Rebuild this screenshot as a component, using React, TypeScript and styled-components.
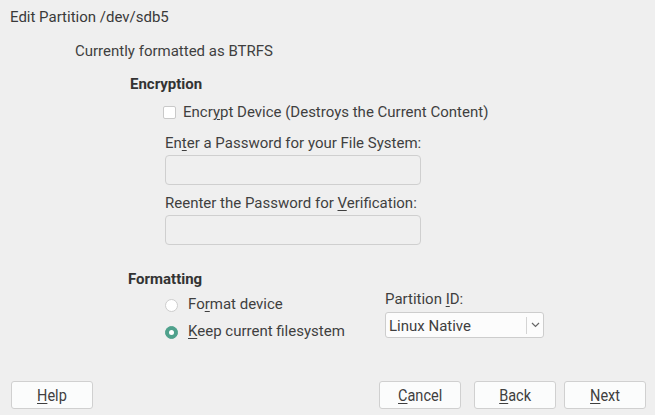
import React from 'react'
import styled, { createGlobalStyle } from 'styled-components'

const GlobalStyle = createGlobalStyle`
  html, body {
    margin: 0;
    padding: 0;
    background: #efefef;
  }
  body {
    font-family: Roboto, 'Liberation Sans', sans-serif;
    font-size: 15px;
    color: #3f3f3f;
  }
`

const Page = styled.div`
  box-sizing: border-box;
  width: 655px;
  height: 415px;
  display: flex;
  flex-direction: column;
  background: #efefef;
  line-height: 20px;
`

const Title = styled.div`
  margin: 7px 0 0 10px;
  color: #3a3a3a;
`

const Current = styled.div`
  margin: 14px 0 0 75px;
`

const Section = styled.div<{ indent: number; top: number }>`
  margin: ${({ top }) => top}px 0 0 ${({ indent }) => indent}px;
  display: flex;
  flex-direction: column;
`

const Heading = styled.div`
  font-weight: 700;
  color: #333;
`

const CheckRow = styled.label`
  display: flex;
  align-items: center;
  gap: 7px;
  margin: 8px 0 0 33px;
`

const CheckBox = styled.span`
  box-sizing: border-box;
  width: 13px;
  height: 13px;
  margin-top: 1px;
  background: #fff;
  border: 1px solid #c9c9c9;
  border-radius: 2px;
`

const Fields = styled.div`
  margin-left: 35px;
  display: flex;
  flex-direction: column;
`

const FieldLabel = styled.div<{ top: number }>`
  margin-top: ${({ top }) => top}px;
`

const TextBox = styled.div`
  box-sizing: border-box;
  margin-top: 2px;
  width: 256px;
  height: 30px;
  background: #efefef;
  border: 1px solid #cfcfcf;
  border-radius: 4px;
`

const FormatBody = styled.div`
  display: grid;
  grid-template-columns: 220px 159px;
  margin-left: 37px;
`

const Radios = styled.div`
  display: flex;
  flex-direction: column;
  gap: 7px;
  margin-top: 5px;
`

const RadioRow = styled.label`
  display: flex;
  align-items: center;
  gap: 10px;
`

const Radio = styled.span<{ checked?: boolean }>`
  box-sizing: border-box;
  position: relative;
  width: 13px;
  height: 13px;
  margin-top: 3px;
  border-radius: 50%;
  background: ${({ checked }) => (checked ? '#4fa18c' : '#fff')};
  border: 1px solid ${({ checked }) => (checked ? '#4fa18c' : '#cdcdcd')};

  &::after {
    content: '';
    display: ${({ checked }) => (checked ? 'block' : 'none')};
    position: absolute;
    left: 3px;
    top: 3px;
    width: 5px;
    height: 5px;
    border-radius: 50%;
    background: #fff;
  }
`

const PartitionCol = styled.div`
  display: flex;
  flex-direction: column;
`

const Select = styled.div`
  box-sizing: border-box;
  margin-top: 3px;
  height: 26px;
  display: flex;
  align-items: center;
  background: #fcfcfc;
  border: 1px solid #cdcdcd;
  border-radius: 3px;
  padding-left: 3px;
`

const SelectValue = styled.span`
  flex: 1;
  margin-top: 1px;
`

const SelectArrow = styled.span`
  display: flex;
  align-items: center;
  justify-content: center;
  height: 17px;
  width: 16px;
  border-left: 1px solid #d4d4d4;
  color: #666;
`

const Footer = styled.div`
  margin-top: auto;
  display: flex;
  padding: 0 8px 6px 11px;
`

const Button = styled.button<{ gapLeft?: number }>`
  box-sizing: border-box;
  width: 82px;
  height: 28px;
  margin-left: ${({ gapLeft }) => gapLeft ?? 0}px;
  background: #fbfcfc;
  border: 1px solid #d0d0d0;
  border-radius: 3px;
  font-family: Roboto, 'Liberation Sans', sans-serif;
  font-size: 16.5px;
  color: #3f3f3f;
  padding: 0;
  display: flex;
  align-items: center;
  justify-content: center;
`

const ButtonText = styled.span`
  display: inline-block;
  transform: scaleX(0.88);
`

const Key = styled.u`
  text-decoration-thickness: 1px;
  text-underline-offset: 2px;
`

function Chevron() {
  return (
    <svg width="9" height="6" viewBox="0 0 9 6">
      <path d="M1 1l3.5 3.5L8 1" fill="none" stroke="#666" strokeWidth="1.2" />
    </svg>
  )
}

export default function App() {
  return (
    <>
      <GlobalStyle />
      <Page>
        <Title>Edit Partition /dev/sdb5</Title>
        <Current>Currently formatted as BTRFS</Current>

        <Section indent={130} top={13}>
          <Heading>Encryption</Heading>
          <CheckRow>
            <CheckBox />
            <span>
              Encr<Key>y</Key>pt Device (Destroys the Current Content)
            </span>
          </CheckRow>
          <Fields>
            <FieldLabel top={11}>
              En<Key>t</Key>er a Password for your File System:
            </FieldLabel>
            <TextBox />
            <FieldLabel top={8}>
              Reenter the Password for <Key>V</Key>erification:
            </FieldLabel>
            <TextBox />
          </Fields>
        </Section>

        <Section indent={128} top={24}>
          <Heading>Formatting</Heading>
          <FormatBody>
            <Radios>
              <RadioRow>
                <Radio />
                <span>
                  Fo<Key>r</Key>mat device
                </span>
              </RadioRow>
              <RadioRow>
                <Radio checked />
                <span>
                  <Key>K</Key>eep current filesystem
                </span>
              </RadioRow>
            </Radios>
            <PartitionCol>
              <span>
                Partition <Key>I</Key>D:
              </span>
              <Select>
                <SelectValue>Linux Native</SelectValue>
                <SelectArrow>
                  <Chevron />
                </SelectArrow>
              </Select>
            </PartitionCol>
          </FormatBody>
        </Section>

        <Footer>
          <Button>
            <ButtonText>
              <Key>H</Key>elp
            </ButtonText>
          </Button>
          <Button gapLeft={286}>
            <ButtonText>
              <Key>C</Key>ancel
            </ButtonText>
          </Button>
          <Button gapLeft={13}>
            <ButtonText>
              <Key>B</Key>ack
            </ButtonText>
          </Button>
          <Button gapLeft={8}>
            <ButtonText>
              <Key>N</Key>ext
            </ButtonText>
          </Button>
        </Footer>
      </Page>
    </>
  )
}
